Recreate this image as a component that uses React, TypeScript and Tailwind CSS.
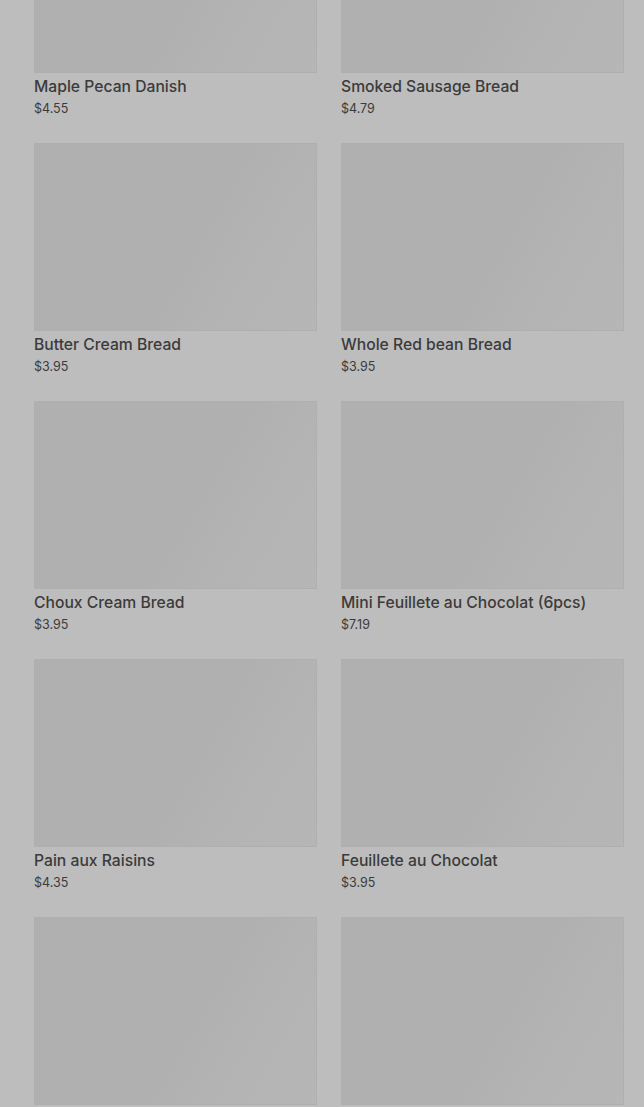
interface Product {
  name: string;
  price: string;
}

const products: Product[] = [
  { name: 'Maple Pecan Danish', price: '$4.55' },
  { name: 'Smoked Sausage Bread', price: '$4.79' },
  { name: 'Butter Cream Bread', price: '$3.95' },
  { name: 'Whole Red bean Bread', price: '$3.95' },
  { name: 'Choux Cream Bread', price: '$3.95' },
  { name: 'Mini Feuillete au Chocolat (6pcs)', price: '$7.19' },
  { name: 'Pain aux Raisins', price: '$4.35' },
  { name: 'Feuillete au Chocolat', price: '$3.95' },
  { name: 'Croissant', price: '$3.25' },
  { name: 'Sweet Potato Bread', price: '$4.25' },
];

function ProductCard({ product }: { product: Product }) {
  return (
    <div className="flex flex-col">
      <div className="h-[188px] w-full border border-[#afafaf] bg-[linear-gradient(120deg,#b0b0b0_55%,#b3b3b3_72%,#b6b6b6_100%)]" />
      <p className="mt-[3px] text-[15.7px] leading-[22px] font-medium text-[#3b3b3b]">
        {product.name}
      </p>
      <p className="mt-[1px] text-[12.5px] leading-[20px] text-[#3b3b3b]">{product.price}</p>
    </div>
  );
}

export default function App() {
  return (
    <div
      className="h-[1107px] w-full overflow-hidden bg-[#bdbdbd]"
      style={{ fontFamily: 'Inter, "Noto Sans", sans-serif' }}
    >
      <div className="mt-[-115px] grid grid-cols-2 gap-x-[24px] gap-y-[24px] pl-[34px] pr-[20px]">
        {products.map(p => (
          <ProductCard key={p.name} product={p} />
        ))}
      </div>
    </div>
  );
}
